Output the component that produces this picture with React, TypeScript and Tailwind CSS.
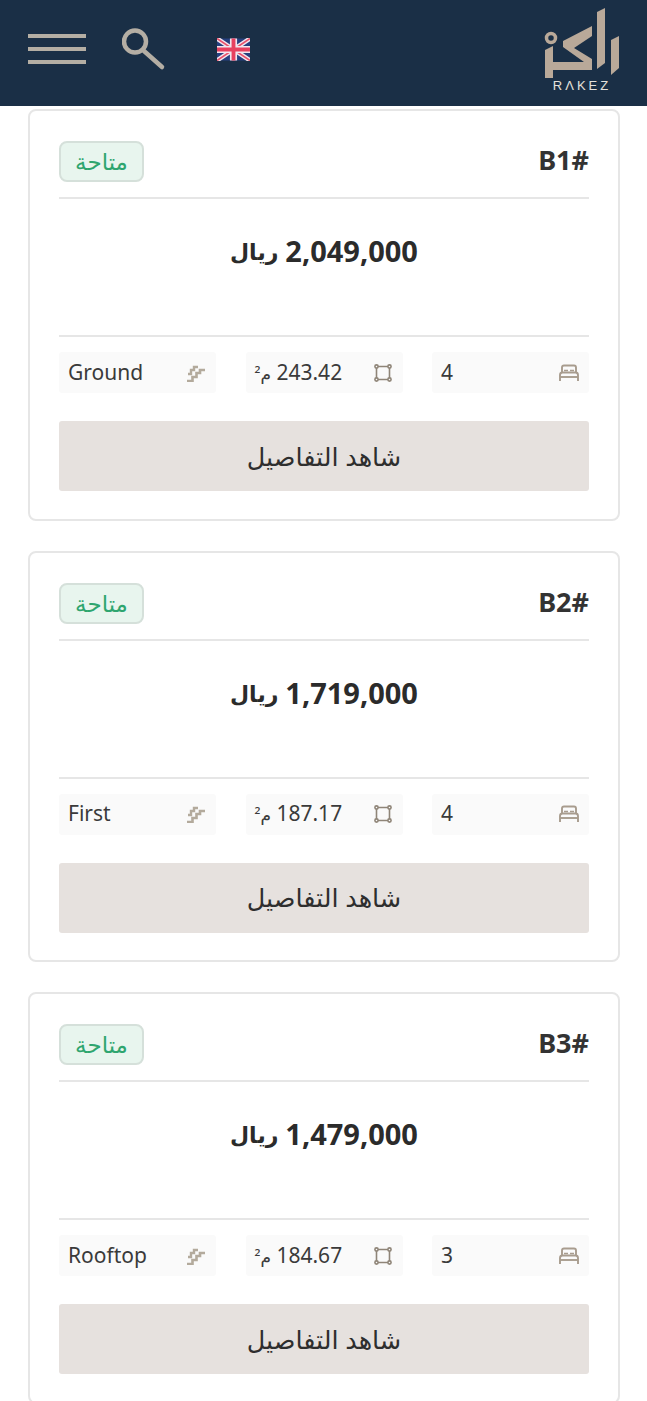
import React from "react";

const units = [
    { code: "B1#", price: "2,049,000", beds: "4", area: "243.42", floor: "Ground" },
    { code: "B2#", price: "1,719,000", beds: "4", area: "187.17", floor: "First" },
    { code: "B3#", price: "1,479,000", beds: "3", area: "184.67", floor: "Rooftop" },
];

const BedIcon = () => (
    <svg width="20" height="18" viewBox="0 0 20 18" fill="none" stroke="#a89c8e" strokeWidth="1.9">
        <path d="M3 8V3.5Q3 1.5 5 1.5H15Q17 1.5 17 3.5V8" />
        <path d="M1 17V11Q1 8.5 3.5 8.5H16.5Q19 8.5 19 11V17" />
        <path d="M1 13H19" />
        <path d="M5 6.5H9M11 6.5H15" strokeWidth="1.5" />
    </svg>
);

const AreaIcon = () => (
    <svg width="18" height="18" viewBox="0 0 18 18" fill="none" stroke="#8f8578" strokeWidth="1.6">
        <path d="M4 2.5H14M4 15.5H14M2.5 4V14M15.5 4V14" />
        <circle cx="2.5" cy="2.5" r="1.6" />
        <circle cx="15.5" cy="2.5" r="1.6" />
        <circle cx="2.5" cy="15.5" r="1.6" />
        <circle cx="15.5" cy="15.5" r="1.6" />
    </svg>
);

const StairsIcon = () => (
    <svg width="18" height="18" viewBox="0 0 18 18" fill="none" stroke="#b3aa9c" strokeWidth="2.6">
        <path d="M0 17H5.5V13H9.5V9H13V6H18" />
        <path d="M1 10H4V6H7V3H11" strokeWidth="2.4" />
    </svg>
);

const Flag = () => (
    <svg width="33" height="23" viewBox="0 0 60 40">
        <rect width="60" height="40" fill="#27407f" />
        <path d="M0 0L60 40M60 0L0 40" stroke="#f2e6ee" strokeWidth="8" />
        <path d="M0 0L60 40M60 0L0 40" stroke="#e8506a" strokeWidth="3" />
        <path d="M30 0V40M0 20H60" stroke="#f2e6ee" strokeWidth="13" />
        <path d="M30 0V40M0 20H60" stroke="#e8405f" strokeWidth="7" />
    </svg>
);

const Logo = () => (
    <div className="flex flex-col items-center">
        <svg width="76" height="72" viewBox="544 6 76 72" fill="#b9a999">
            <path d="M611 40L619 36V68L611 75Z" />
            <path d="M597 12L605 8V63L597 69Z" />
            <path d="M592 26V36L574 48L592 59V70H553V62H584L563 47V41Z" />
            <path d="M545 50L553 46V78L545 78Z" />
            <circle cx="551" cy="38" r="4.5" fill="none" stroke="#b9a999" strokeWidth="3.5" />
        </svg>
        <span className="font-['Liberation_Sans',sans-serif] text-[13px] leading-[16px] tracking-[3px] text-[#e4e1dc]">
            RΛKEZ
        </span>
    </div>
);

const Spec = ({ icon, children }: { icon: React.ReactNode; children: React.ReactNode }) => (
    <div className="flex h-[41px] items-center justify-between rounded-[3px] bg-[#fafafa] pl-[9px] pr-[10px] text-[21px] text-[#3a3a3a]">
        <span className="flex w-[20px] justify-center">{icon}</span>
        <span dir="rtl">{children}</span>
    </div>
);

export default function App() {
    return (
        <div className="h-[1401px] overflow-hidden bg-white font-['Noto_Sans','DejaVu_Sans',sans-serif]">
            <header className="flex h-[106px] items-start justify-between bg-[#1a2f46] pl-[28px] pr-[27px]">
                <div className="flex items-start">
                    <button className="mt-[34px] flex h-[30px] w-[58px] flex-col justify-between">
                        <span className="h-[4px] w-full bg-[#b4aea4]" />
                        <span className="h-[4px] w-full bg-[#b4aea4]" />
                        <span className="h-[4px] w-full bg-[#b4aea4]" />
                    </button>
                    <svg className="ml-[36px] mt-[27px]" width="44" height="44" viewBox="0 0 44 44" fill="none" stroke="#b4aea4" strokeWidth="4.5" strokeLinecap="round">
                        <circle cx="13" cy="14.5" r="11" />
                        <path d="M22 24L40 40" />
                    </svg>
                    <div className="ml-[51px] mt-[38px]">
                        <Flag />
                    </div>
                </div>
                <div className="mt-[6px]">
                    <Logo />
                </div>
            </header>
            <main dir="rtl" className="flex flex-col gap-[30px] pl-[28px] pr-[27px] pt-[3px]">
                {units.map((unit) => (
                    <section key={unit.code} className="h-[411.5px] shrink-0 rounded-[8px] border-2 border-[#e6e6e6] px-[29px] pt-[30px]">
                        <div className="flex h-[58px] items-start justify-between border-b-2 border-[#e6e6e6]">
                            <h3 dir="ltr" className="mt-[6px] text-[27px] font-bold leading-[26px] text-[#333]">
                                {unit.code}
                            </h3>
                            <span className="flex h-[41px] w-[85px] items-center justify-center rounded-[8px] border-2 border-[#d5e0da] bg-[#e8f5ee] text-[23px] text-[#2fa56f]">
                                متاحة
                            </span>
                        </div>
                        <div className="flex h-[138px] items-start justify-center border-b-2 border-[#e6e6e6] pt-[29px]">
                            <p className="flex items-center gap-[7px] text-[29px] font-bold leading-[46px] text-[#2b2b2b]">
                                <span>{unit.price}</span>
                                <span className="text-[22px]">ريال</span>
                            </p>
                        </div>
                        <div className="mt-[15px] grid grid-cols-3 gap-[29.5px]">
                            <Spec icon={<BedIcon />}>{unit.beds}</Spec>
                            <Spec icon={<AreaIcon />}>
                                {unit.area} <span className="text-[17px]">م²</span>
                            </Spec>
                            <Spec icon={<StairsIcon />}>{unit.floor}</Spec>
                        </div>
                        <button className="mt-[28px] h-[70px] w-full rounded-[3px] bg-[#e6e1de] text-[25.5px] text-[#2e2e2e]">
                            شاهد التفاصيل
                        </button>
                    </section>
                ))}
            </main>
        </div>
    );
}
